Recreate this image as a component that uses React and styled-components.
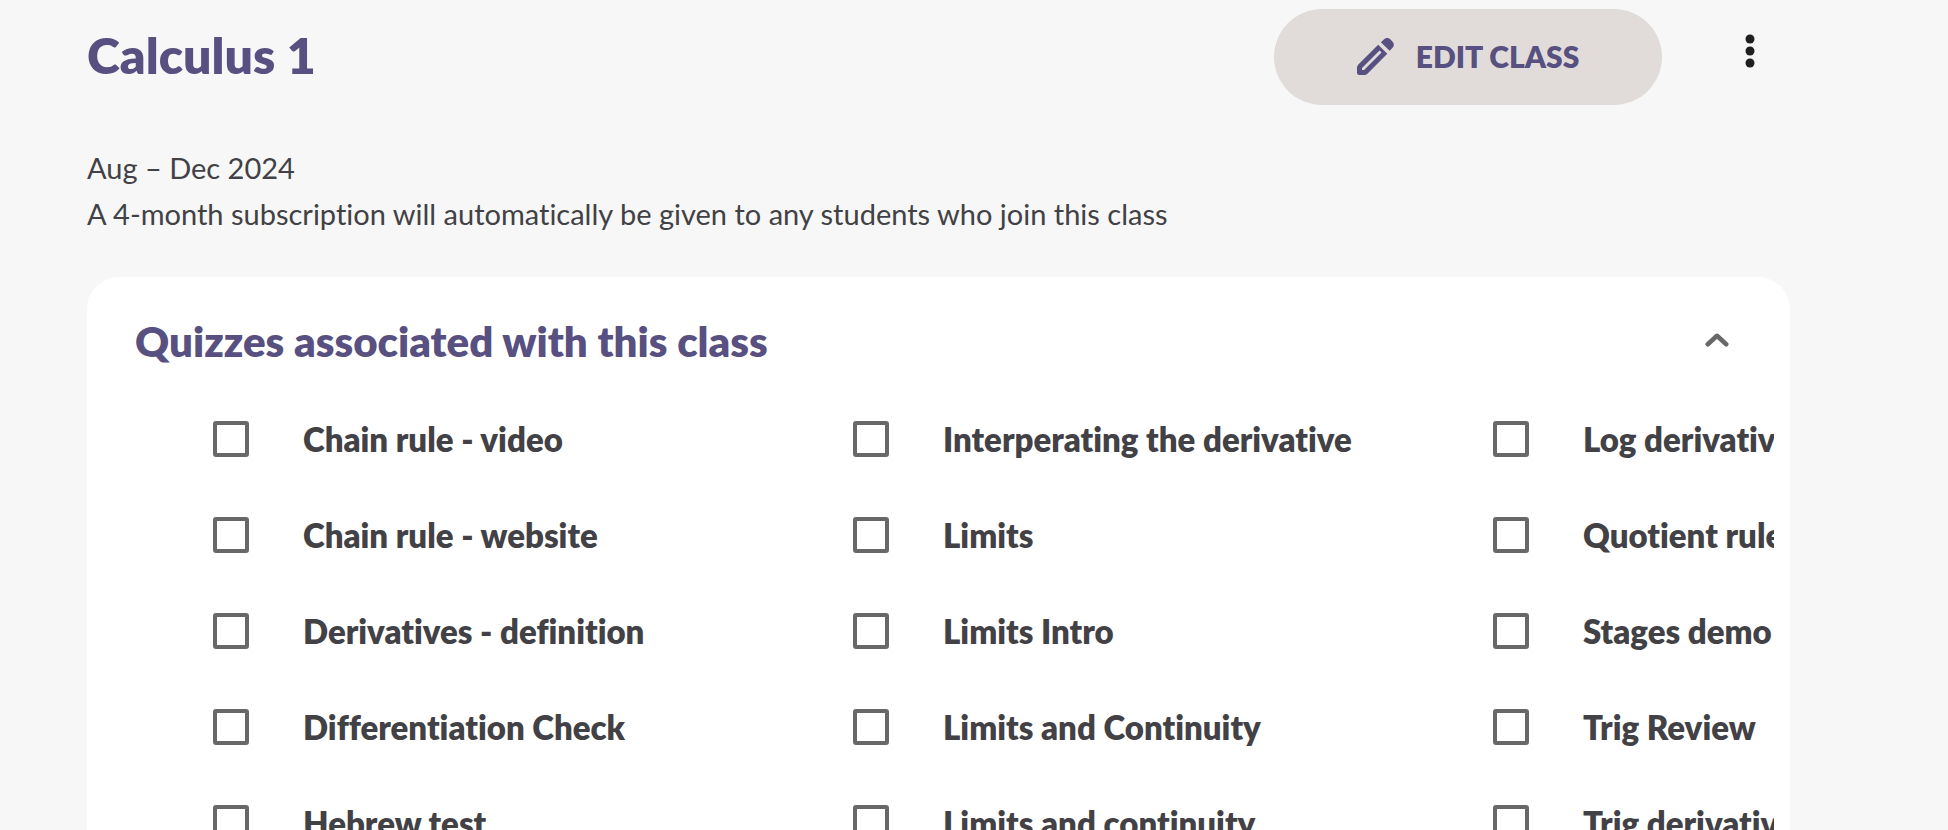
import React, { useState } from 'react';
import styled, { createGlobalStyle } from 'styled-components';

const GlobalStyle = createGlobalStyle`
    * {
        box-sizing: border-box;
    }

    body {
        margin: 0;
        background-color: #f7f7f7;
        color: #424145;
        font-family: Lato, "Open Sans", sans-serif;
        font-variant-ligatures: none;
    }
`;

const Page = styled.main`
    height: 100vh;
    padding: 9px 158px 0 87px;
    overflow: hidden;
`;

const Header = styled.header`
    display: flex;
    align-items: center;
`;

const Title = styled.h1`
    flex: 1;
    margin: 0;
    padding-bottom: 4px;
    color: #575080;
    font-size: 50px;
    line-height: 60px;
    font-weight: 800;
`;

const EditButton = styled.button`
    display: flex;
    align-items: center;
    justify-content: center;
    gap: 22px;
    width: 388px;
    height: 96px;
    padding: 0 0 2px;
    border: none;
    border-radius: 48px;
    background-color: #e1dcda;
    color: #575080;
    font-family: inherit;
    font-size: 30px;
    font-weight: 800;
    text-transform: uppercase;
    cursor: pointer;
`;

const MenuButton = styled.button`
    display: flex;
    align-items: center;
    justify-content: center;
    align-self: flex-start;
    width: 80px;
    height: 84px;
    margin-left: 48px;
    padding: 0;
    border: none;
    background: none;
    color: #1f1f1f;
    cursor: pointer;
`;

const Details = styled.div`
    margin: 40px 0;
`;

const DetailLine = styled.p`
    margin: 0;
    font-size: 29px;
    line-height: 46px;
`;

const Card = styled.section`
    padding: 40px 16px;
    border-radius: 32px;
    background-color: #fff;
`;

const CardHeader = styled.div`
    display: flex;
    align-items: flex-start;
    justify-content: space-between;
    padding: 0 32px;
    margin-bottom: 26px;
`;

const CardTitle = styled.h2`
    margin: 0;
    color: #575080;
    font-size: 42px;
    line-height: 48px;
    font-weight: 800;
`;

const CollapseButton = styled.button`
    display: flex;
    align-items: center;
    justify-content: center;
    width: 50px;
    height: 46px;
    padding: 0;
    border: none;
    background: none;
    color: #686868;
    cursor: pointer;
`;

const QuizGrid = styled.div`
    display: grid;
    grid-template-rows: repeat(5, 96px);
    grid-auto-flow: column;
    grid-auto-columns: 640px;
    overflow: hidden;
`;

const QuizLabel = styled.label`
    display: flex;
    align-items: center;
    gap: 54px;
    padding-left: 110px;
    font-size: 33px;
    line-height: 40px;
    font-weight: 800;
    white-space: nowrap;
    cursor: pointer;
`;

const Checkbox = styled.input`
    appearance: none;
    flex: none;
    width: 36px;
    height: 36px;
    margin: 0;
    border: 4px solid #686868;
    border-radius: 3px;
    background-color: #fff;
    cursor: pointer;

    &:checked {
        background-color: #575080;
        border-color: #575080;
    }
`;

const quizzes = [
    'Chain rule - video',
    'Chain rule - website',
    'Derivatives - definition',
    'Differentiation Check',
    'Hebrew test',
    'Interperating the derivative',
    'Limits',
    'Limits Intro',
    'Limits and Continuity',
    'Limits and continuity',
    'Log derivatives',
    'Quotient rule',
    'Stages demo',
    'Trig Review',
    'Trig derivatives',
];

const PencilIcon = () => (
    <svg width="37" height="37" viewBox="0 0 110 110" fill="currentColor" aria-hidden="true">
        <path
            fillRule="evenodd"
            d="M63 20 L90 47 L31 106 Q27 110 22 110 H7 Q0 110 0 103 V88 Q0 83 4 79 Z M67 37 L15 89 V95 H21 L73 43 Z"
        />
        <path d="M71 13 L79 5 Q88 -4 98 3 Q104 8 107 13 Q113 22 105 30 L97 38 Z" />
    </svg>
);

const DotsIcon = () => (
    <svg width="10" height="34" viewBox="0 0 10 34" fill="currentColor" aria-hidden="true">
        <circle cx="5" cy="5" r="4.5" />
        <circle cx="5" cy="17" r="4.5" />
        <circle cx="5" cy="29" r="4.5" />
    </svg>
);

const ChevronIcon = () => (
    <svg width="24" height="14" viewBox="0 0 24 14" fill="none" aria-hidden="true">
        <path
            d="M2.8 11.2 L12 2.8 L21.2 11.2"
            stroke="currentColor"
            strokeWidth="4.6"
            strokeLinecap="round"
            strokeLinejoin="round"
        />
    </svg>
);

export default function App() {
    const [isOpen, setOpen] = useState(true);
    const [selected, setSelected] = useState([]);

    const toggleQuiz = (name) => {
        setSelected((prev) =>
            prev.includes(name) ? prev.filter((n) => n !== name) : [...prev, name]
        );
    };

    return (
        <>
            <GlobalStyle />
            <Page>
                <Header>
                    <Title>Calculus 1</Title>
                    <EditButton type="button">
                        <PencilIcon />
                        Edit class
                    </EditButton>
                    <MenuButton type="button" aria-label="More options">
                        <DotsIcon />
                    </MenuButton>
                </Header>
                <Details>
                    <DetailLine>Aug – Dec 2024</DetailLine>
                    <DetailLine>
                        A 4-month subscription will automatically be given to any students who join this class
                    </DetailLine>
                </Details>
                <Card>
                    <CardHeader>
                        <CardTitle>Quizzes associated with this class</CardTitle>
                        <CollapseButton
                            type="button"
                            aria-label="Toggle quizzes"
                            aria-expanded={isOpen}
                            onClick={() => setOpen(!isOpen)}
                        >
                            <ChevronIcon />
                        </CollapseButton>
                    </CardHeader>
                    {isOpen && (
                        <QuizGrid>
                            {quizzes.map((name) => (
                                <QuizLabel key={name}>
                                    <Checkbox
                                        type="checkbox"
                                        checked={selected.includes(name)}
                                        onChange={() => toggleQuiz(name)}
                                    />
                                    {name}
                                </QuizLabel>
                            ))}
                        </QuizGrid>
                    )}
                </Card>
            </Page>
        </>
    );
}
